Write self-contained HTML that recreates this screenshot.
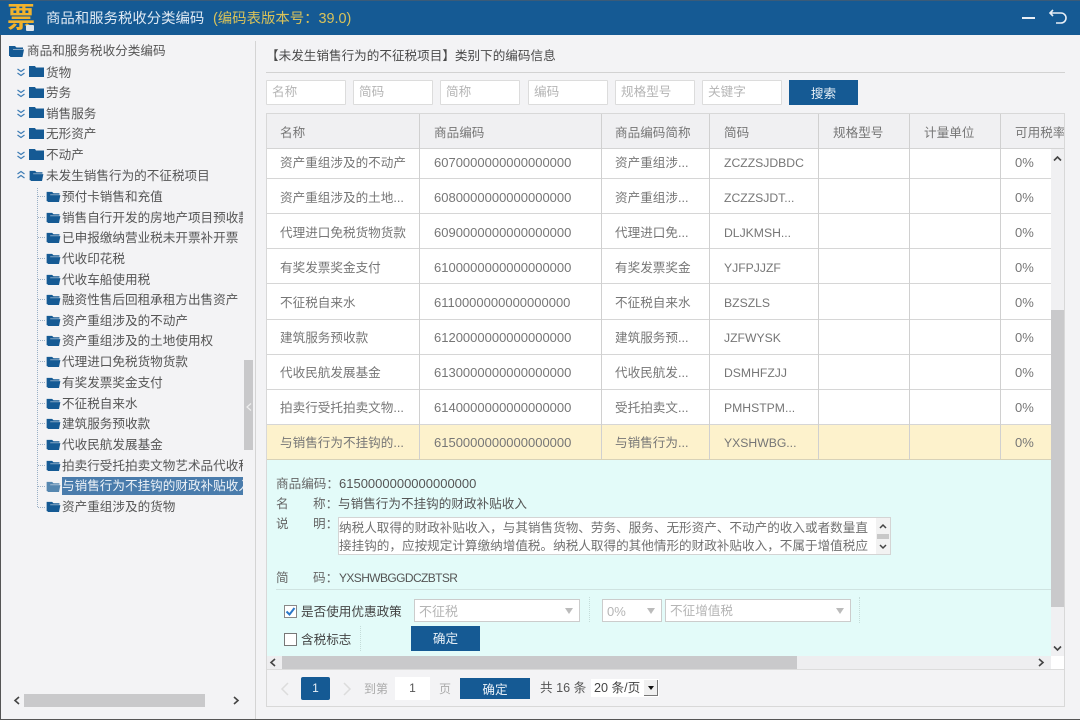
<!DOCTYPE html>
<html><head><meta charset="utf-8"><style>
*{box-sizing:border-box;margin:0;padding:0}
html,body{width:1080px;height:720px;overflow:hidden;background:#f3f3f5}
body{position:relative;font-family:"Liberation Sans","Noto Sans CJK SC",sans-serif;font-size:12.6px;color:#666}
div,span,svg{position:absolute}
.t{white-space:nowrap;line-height:16px;height:16px;margin-top:1px}
.tree{color:#555;overflow:hidden}
.r{left:267px;width:784px;height:1px;background:#d6d6d6}
.v{width:1px;background:#d0d0d0}
.c{white-space:nowrap;line-height:16px;height:16px;color:#767676;margin-top:1px}
.n{font-size:13px}
.z{font-size:12.2px}
.inp{top:80px;width:80px;height:25px;background:#fff;border:1px solid #dcdcdc;color:#b5b5b5;padding-left:5px;line-height:23px;border-radius:1px}
.btn{background:#155a94;color:#e8f0f7;text-align:center}
.sel{background:#fff;border:1px solid #ccc;height:23px;color:#b5b5b5;line-height:23px;padding-left:4px;top:599px;font-size:13px}
.sel i{position:absolute;right:6px;top:8px;width:0;height:0;border:4px solid transparent;border-top:6px solid #bbb;border-bottom:0}
.h{left:38px;width:7px;height:0;border-top:1px dotted #9ab0c6}
.dot{width:0;border-left:1px dotted #c4dcd9}
</style></head><body>
<svg width="0" height="0" style="left:0;top:0"><defs>
<symbol id="f" viewBox="0 0 15 12"><path d="M0 1h6l1.500 1.500H14V4H4L2.500 11H0z" fill="#155a94"/><path d="M3 4.500h12L13.500 12H1z" fill="#155a94"/></symbol>
<symbol id="s" viewBox="0 0 15 11"><path d="M0 0h6l1 1.500h8V11H0z" fill="#155a94"/></symbol>
<symbol id="d" viewBox="0 0 10 12"><path d="M1.500 1l3.500 2.500L8.500 1M1.500 5l3.500 2.500L8.500 5" fill="none" stroke="#3d7cb5" stroke-width="1.200"/></symbol>
<symbol id="u" viewBox="0 0 10 12"><path d="M1.500 6l3.500-2.500L8.500 6M1.500 10l3.500-2.500L8.500 10" fill="none" stroke="#3d7cb5" stroke-width="1.200"/></symbol>
</defs></svg>

<!-- title bar -->
<div style="left:0;top:0;width:1080px;height:35px;background:#155a94"></div>
<div style="left:0;top:0;width:1080px;height:1px;background:#3b5b78"></div>
<div style="left:6px;top:3px;width:30px;height:31px;font-size:28px;line-height:30px;font-weight:bold;color:#f2b32c;text-align:center">票</div>
<div style="left:26px;top:25px;width:8px;height:6px;background:#dfe6ec;border-radius:1px"></div>
<div class="t" style="left:46px;top:10px;color:#dfe9f3;font-size:14.400px">商品和服务税收分类编码</div>
<div class="t" style="left:213px;top:10px;color:#d9c25a;font-size:14.400px">(编码表版本号：39.0)</div>
<svg style="left:1020px;top:7px" width="60" height="20" viewBox="0 0 60 20"><path d="M2 11h13" stroke="#e8eef5" stroke-width="2"/><path d="M33 3l-3 3 3 3M30 6h11a5 5 0 0 1 5 5v0a5 5 0 0 1-5 5h-5" fill="none" stroke="#e8eef5" stroke-width="1.600"/></svg>

<!-- frame -->
<div style="left:0;top:35px;width:1px;height:685px;background:#555"></div>
<div style="left:0;top:719px;width:1080px;height:1px;background:#555"></div>
<div style="left:255px;top:41px;width:1px;height:678px;background:#d4d4d4"></div>

<!-- tree -->
<svg style="left:9px;top:45px" width="15" height="12"><use href="#f"/></svg>
<div class="t tree" style="left:27px;top:42px;width:216px">商品和服务税收分类编码</div>
<svg style="left:16px;top:68px" width="10" height="12"><use href="#d"/></svg><svg style="left:29px;top:66px" width="15" height="11"><use href="#s"/></svg><div class="t tree" style="left:46px;top:64px">货物</div>
<svg style="left:16px;top:89px" width="10" height="12"><use href="#d"/></svg><svg style="left:29px;top:87px" width="15" height="11"><use href="#s"/></svg><div class="t tree" style="left:46px;top:84px">劳务</div>
<svg style="left:16px;top:109px" width="10" height="12"><use href="#d"/></svg><svg style="left:29px;top:107px" width="15" height="11"><use href="#s"/></svg><div class="t tree" style="left:46px;top:105px">销售服务</div>
<svg style="left:16px;top:130px" width="10" height="12"><use href="#d"/></svg><svg style="left:29px;top:128px" width="15" height="11"><use href="#s"/></svg><div class="t tree" style="left:46px;top:125px">无形资产</div>
<svg style="left:16px;top:151px" width="10" height="12"><use href="#d"/></svg><svg style="left:29px;top:149px" width="15" height="11"><use href="#s"/></svg><div class="t tree" style="left:46px;top:146px">不动产</div>
<svg style="left:16px;top:168px" width="10" height="12"><use href="#u"/></svg><svg style="left:29px;top:170px" width="15" height="11"><use href="#f"/></svg><div class="t tree" style="left:46px;top:167px">未发生销售行为的不征税项目</div>

<div style="left:37px;top:188px;width:0;height:319px;border-left:1px dotted #9ab0c6"></div>
<div class="h" style="top:196px"></div><div class="h" style="top:217px"></div><div class="h" style="top:237px"></div><div class="h" style="top:258px"></div><div class="h" style="top:279px"></div><div class="h" style="top:299px"></div><div class="h" style="top:320px"></div><div class="h" style="top:340px"></div><div class="h" style="top:361px"></div><div class="h" style="top:382px"></div><div class="h" style="top:403px"></div><div class="h" style="top:423px"></div><div class="h" style="top:444px"></div><div class="h" style="top:465px"></div><div class="h" style="top:486px"></div><div class="h" style="top:507px"></div>
<svg style="left:46px;top:191px" width="15" height="11"><use href="#f"/></svg><div class="t tree" style="left:62px;top:188px;width:181px">预付卡销售和充值</div>
<svg style="left:46px;top:212px" width="15" height="11"><use href="#f"/></svg><div class="t tree" style="left:62px;top:209px;width:181px">销售自行开发的房地产项目预收款</div>
<svg style="left:46px;top:232px" width="15" height="11"><use href="#f"/></svg><div class="t tree" style="left:62px;top:229px;width:181px">已申报缴纳营业税未开票补开票</div>
<svg style="left:46px;top:253px" width="15" height="11"><use href="#f"/></svg><div class="t tree" style="left:62px;top:250px;width:181px">代收印花税</div>
<svg style="left:46px;top:274px" width="15" height="11"><use href="#f"/></svg><div class="t tree" style="left:62px;top:271px;width:181px">代收车船使用税</div>
<svg style="left:46px;top:294px" width="15" height="11"><use href="#f"/></svg><div class="t tree" style="left:62px;top:291px;width:181px">融资性售后回租承租方出售资产</div>
<svg style="left:46px;top:315px" width="15" height="11"><use href="#f"/></svg><div class="t tree" style="left:62px;top:312px;width:181px">资产重组涉及的不动产</div>
<svg style="left:46px;top:335px" width="15" height="11"><use href="#f"/></svg><div class="t tree" style="left:62px;top:332px;width:181px">资产重组涉及的土地使用权</div>
<svg style="left:46px;top:356px" width="15" height="11"><use href="#f"/></svg><div class="t tree" style="left:62px;top:353px;width:181px">代理进口免税货物货款</div>
<svg style="left:46px;top:377px" width="15" height="11"><use href="#f"/></svg><div class="t tree" style="left:62px;top:374px;width:181px">有奖发票奖金支付</div>
<svg style="left:46px;top:398px" width="15" height="11"><use href="#f"/></svg><div class="t tree" style="left:62px;top:395px;width:181px">不征税自来水</div>
<svg style="left:46px;top:418px" width="15" height="11"><use href="#f"/></svg><div class="t tree" style="left:62px;top:415px;width:181px">建筑服务预收款</div>
<svg style="left:46px;top:439px" width="15" height="11"><use href="#f"/></svg><div class="t tree" style="left:62px;top:436px;width:181px">代收民航发展基金</div>
<svg style="left:46px;top:460px" width="15" height="11"><use href="#f"/></svg><div class="t tree" style="left:62px;top:457px;width:181px">拍卖行受托拍卖文物艺术品代收税</div>
<svg style="left:46px;top:481px;opacity:.7" width="15" height="11"><use href="#f"/></svg><div class="t tree" style="left:62px;top:476px;width:181px;height:18px;line-height:19px;background:#4a7cac;color:#eef3f8">与销售行为不挂钩的财政补贴收入</div>
<svg style="left:46px;top:501px" width="15" height="11"><use href="#f"/></svg><div class="t tree" style="left:62px;top:498px;width:181px">资产重组涉及的货物</div>

<div style="left:244px;top:360px;width:9px;height:90px;background:#c8c8ca"></div>
<svg style="left:245px;top:402px" width="8" height="10"><path d="M6 1.500L2 5l4 3.500" fill="none" stroke="#eee" stroke-width="1.200"/></svg>

<div style="left:24px;top:694px;width:181px;height:13px;background:#c9c9cb"></div>
<svg style="left:13px;top:696px" width="8" height="9"><path d="M6 1L2 4.500 6 8" fill="none" stroke="#444" stroke-width="1.600"/></svg>
<svg style="left:232px;top:696px" width="8" height="9"><path d="M2 1l4 3.500L2 8" fill="none" stroke="#444" stroke-width="1.600"/></svg>

<!-- right heading -->
<div class="t" style="left:266px;top:47px;color:#4a4a4a">【未发生销售行为的不征税项目】类别下的编码信息</div>
<div style="left:266px;top:72px;width:799px;height:1px;background:#d2d2d2"></div>

<div class="inp" style="left:266px">名称</div>
<div class="inp" style="left:353px">简码</div>
<div class="inp" style="left:440px">简称</div>
<div class="inp" style="left:528px">编码</div>
<div class="inp" style="left:615px">规格型号</div>
<div class="inp" style="left:702px">关键字</div>
<div class="btn" style="left:789px;top:80px;width:69px;height:25px;line-height:28px">搜索</div>

<!-- table -->
<div style="left:266px;top:113px;width:799px;height:594px;border:1px solid #d8d8d8;background:#f3f3f5"></div>
<div style="left:267px;top:114px;width:797px;height:35px;background:#f0f0f2;border-bottom:1px solid #d4d4d4"></div>
<div style="left:267px;top:149px;width:784px;height:276px;background:#fff"></div>
<div style="left:267px;top:425px;width:784px;height:35px;background:#fdf2cc;border-bottom:1px solid #d8d2b8"></div>
<div style="left:267px;top:460px;width:784px;height:196px;background:#e3fbf9"></div>

<div class="r" style="top:178px"></div><div class="r" style="top:213px"></div><div class="r" style="top:248px"></div><div class="r" style="top:283px"></div><div class="r" style="top:319px"></div><div class="r" style="top:354px"></div><div class="r" style="top:389px"></div><div class="r" style="top:424px"></div>
<div class="v" style="left:419px;top:114px;height:345px"></div>
<div class="v" style="left:601px;top:114px;height:345px"></div>
<div class="v" style="left:709px;top:114px;height:345px"></div>
<div class="v" style="left:818px;top:114px;height:345px"></div>
<div class="v" style="left:909px;top:114px;height:345px"></div>
<div class="v" style="left:1000px;top:114px;height:345px"></div>

<div class="c" style="left:280px;top:124px">名称</div><div class="c" style="left:434px;top:124px">商品编码</div><div class="c" style="left:615px;top:124px">商品编码简称</div><div class="c" style="left:724px;top:124px">简码</div><div class="c" style="left:833px;top:124px">规格型号</div><div class="c" style="left:924px;top:124px">计量单位</div><div class="c" style="left:1015px;top:124px;width:49px;overflow:hidden">可用税率</div>

<div class="c" style="left:280px;top:154px">资产重组涉及的不动产</div><div class="c n" style="left:434px;top:154px">6070000000000000000</div><div class="c" style="left:615px;top:154px">资产重组涉...</div><div class="c z" style="left:724px;top:154px">ZCZZSJDBDC</div><div class="c n" style="left:1015px;top:154px">0%</div>
<div class="c" style="left:280px;top:189px">资产重组涉及的土地...</div><div class="c n" style="left:434px;top:189px">6080000000000000000</div><div class="c" style="left:615px;top:189px">资产重组涉...</div><div class="c z" style="left:724px;top:189px">ZCZZSJDT...</div><div class="c n" style="left:1015px;top:189px">0%</div>
<div class="c" style="left:280px;top:224px">代理进口免税货物货款</div><div class="c n" style="left:434px;top:224px">6090000000000000000</div><div class="c" style="left:615px;top:224px">代理进口免...</div><div class="c z" style="left:724px;top:224px">DLJKMSH...</div><div class="c n" style="left:1015px;top:224px">0%</div>
<div class="c" style="left:280px;top:259px">有奖发票奖金支付</div><div class="c n" style="left:434px;top:259px">6100000000000000000</div><div class="c" style="left:615px;top:259px">有奖发票奖金</div><div class="c z" style="left:724px;top:259px">YJFPJJZF</div><div class="c n" style="left:1015px;top:259px">0%</div>
<div class="c" style="left:280px;top:294px">不征税自来水</div><div class="c n" style="left:434px;top:294px">6110000000000000000</div><div class="c" style="left:615px;top:294px">不征税自来水</div><div class="c z" style="left:724px;top:294px">BZSZLS</div><div class="c n" style="left:1015px;top:294px">0%</div>
<div class="c" style="left:280px;top:329px">建筑服务预收款</div><div class="c n" style="left:434px;top:329px">6120000000000000000</div><div class="c" style="left:615px;top:329px">建筑服务预...</div><div class="c z" style="left:724px;top:329px">JZFWYSK</div><div class="c n" style="left:1015px;top:329px">0%</div>
<div class="c" style="left:280px;top:364px">代收民航发展基金</div><div class="c n" style="left:434px;top:364px">6130000000000000000</div><div class="c" style="left:615px;top:364px">代收民航发...</div><div class="c z" style="left:724px;top:364px">DSMHFZJJ</div><div class="c n" style="left:1015px;top:364px">0%</div>
<div class="c" style="left:280px;top:399px">拍卖行受托拍卖文物...</div><div class="c n" style="left:434px;top:399px">6140000000000000000</div><div class="c" style="left:615px;top:399px">受托拍卖文...</div><div class="c z" style="left:724px;top:399px">PMHSTPM...</div><div class="c n" style="left:1015px;top:399px">0%</div>
<div class="c" style="left:280px;top:434px">与销售行为不挂钩的...</div><div class="c n" style="left:434px;top:434px">6150000000000000000</div><div class="c" style="left:615px;top:434px">与销售行为...</div><div class="c z" style="left:724px;top:434px">YXSHWBG...</div><div class="c n" style="left:1015px;top:434px">0%</div>

<!-- detail -->
<div class="t" style="left:276px;top:475px;color:#666">商品编码：</div><div class="t n" style="left:339px;top:475px;font-size:13px;color:#555">6150000000000000000</div>
<div class="t" style="left:276px;top:495px;color:#666">名</div><div class="t" style="left:313px;top:495px;color:#666">称：</div><div class="t" style="left:338px;top:495px;color:#555">与销售行为不挂钩的财政补贴收入</div>
<div class="t" style="left:276px;top:515px;color:#666">说</div><div class="t" style="left:313px;top:515px;color:#666">明：</div>
<div style="left:338px;top:517px;width:553px;height:38px;background:#fff;border:1px solid #d4d4d4;color:#666"></div>
<div class="t" style="left:339px;top:519px;color:#707070">纳税人取得的财政补贴收入，与其销售货物、劳务、服务、无形资产、不动产的收入或者数量直</div>
<div class="t" style="left:339px;top:537px;color:#707070">接挂钩的，应按规定计算缴纳增值税。纳税人取得的其他情形的财政补贴收入，不属于增值税应</div>
<div style="left:876px;top:518px;width:14px;height:36px;background:#f2f2f2"></div>
<div style="left:877px;top:534px;width:12px;height:5px;background:#c8c8c8"></div>
<svg style="left:879px;top:523px" width="8" height="6"><path d="M1 5l3-3 3 3" fill="none" stroke="#444" stroke-width="1.500"/></svg>
<svg style="left:879px;top:544px" width="8" height="6"><path d="M1 1l3 3 3-3" fill="none" stroke="#444" stroke-width="1.500"/></svg>

<div class="t" style="left:276px;top:569px;color:#666">简</div><div class="t" style="left:313px;top:569px;color:#666">码：</div><div class="t" style="left:339px;top:569px;font-size:12px;letter-spacing:-.6px;color:#555">YXSHWBGGDCZBTSR</div>
<div style="left:276px;top:589px;width:775px;height:1px;background:#cfe3e1"></div>

<div style="left:284px;top:605px;width:13px;height:13px;background:#fff;border:1px solid #888"></div>
<svg style="left:284px;top:605px" width="13" height="13"><path d="M2.500 6.500l3 3 5-6.500" fill="none" stroke="#2a78c8" stroke-width="2"/></svg>
<div class="t" style="left:301px;top:603px;color:#444">是否使用优惠政策</div>
<div class="sel" style="left:414px;width:166px">不征税<i></i></div>
<div class="dot" style="left:589px;top:597px;height:25px"></div>
<div class="sel" style="left:602px;width:60px">0%<i></i></div>
<div class="sel" style="left:665px;width:186px;font-size:12.600px">不征增值税<i></i></div>
<div class="dot" style="left:859px;top:597px;height:26px"></div>
<div style="left:284px;top:633px;width:13px;height:13px;background:#fff;border:1px solid #777"></div>
<div class="t" style="left:301px;top:631px;color:#444">含税标志</div>
<div class="dot" style="left:360px;top:626px;height:25px"></div>
<div class="btn" style="left:411px;top:626px;width:69px;height:25px;line-height:27px">确定</div>

<!-- table scrollbars -->
<div style="left:1051px;top:149px;width:13px;height:507px;background:#f0f0f2"></div>
<div style="left:1051px;top:310px;width:13px;height:297px;background:#c9c9cb"></div>
<svg style="left:1053px;top:155px" width="9" height="7"><path d="M1 5.500l3.500-3.500L8 5.500" fill="none" stroke="#444" stroke-width="1.600"/></svg>
<svg style="left:1053px;top:645px" width="9" height="7"><path d="M1 1.500l3.500 3.500L8 1.500" fill="none" stroke="#444" stroke-width="1.600"/></svg>
<div style="left:267px;top:656px;width:784px;height:13px;background:#eeeef0"></div>
<div style="left:282px;top:656px;width:515px;height:13px;background:#c9c9cb"></div>
<div style="left:1051px;top:656px;width:13px;height:13px;background:#fff"></div>
<svg style="left:269px;top:658px" width="8" height="9"><path d="M6 1L2 4.500 6 8" fill="none" stroke="#444" stroke-width="1.600"/></svg>
<svg style="left:1037px;top:658px" width="8" height="9"><path d="M2 1l4 3.500L2 8" fill="none" stroke="#444" stroke-width="1.600"/></svg>
<div style="left:267px;top:669px;width:797px;height:1px;background:#dcdcdc"></div>

<!-- pagination -->
<svg style="left:280px;top:682px" width="10" height="14"><path d="M8 1L2 7l6 6" fill="none" stroke="#dcdcdc" stroke-width="1.500"/></svg>
<div style="left:301px;top:677px;width:29px;height:23px;background:#155a94;color:#e8f0f7;text-align:center;line-height:23px;border-radius:2px;font-size:12px">1</div>
<svg style="left:342px;top:682px" width="10" height="14"><path d="M2 1l6 6-6 6" fill="none" stroke="#dcdcdc" stroke-width="1.500"/></svg>
<div class="t" style="left:364px;top:680px;color:#aaa;font-size:12px">到第</div>
<div style="left:395px;top:677px;width:35px;height:23px;background:#fff;color:#555;text-align:center;line-height:23px;font-size:12px">1</div>
<div class="t" style="left:439px;top:680px;color:#aaa;font-size:12px">页</div>
<div class="btn" style="left:460px;top:678px;width:70px;height:21px;line-height:25px">确定</div>
<div class="t" style="left:540px;top:679px;color:#555">共 16 条</div>
<div style="left:591px;top:679px;width:68px;height:18px;background:#fff"></div>
<div class="t" style="left:594px;top:679px;color:#444">20 条/页</div>
<div style="left:644px;top:680px;width:14px;height:16px;background:#f0f0f0;border-right:1px solid #777;border-bottom:1px solid #777"></div>
<div style="left:648px;top:686px;width:0;height:0;border:3.500px solid transparent;border-top:4px solid #111;border-bottom:0"></div>
</body></html>
